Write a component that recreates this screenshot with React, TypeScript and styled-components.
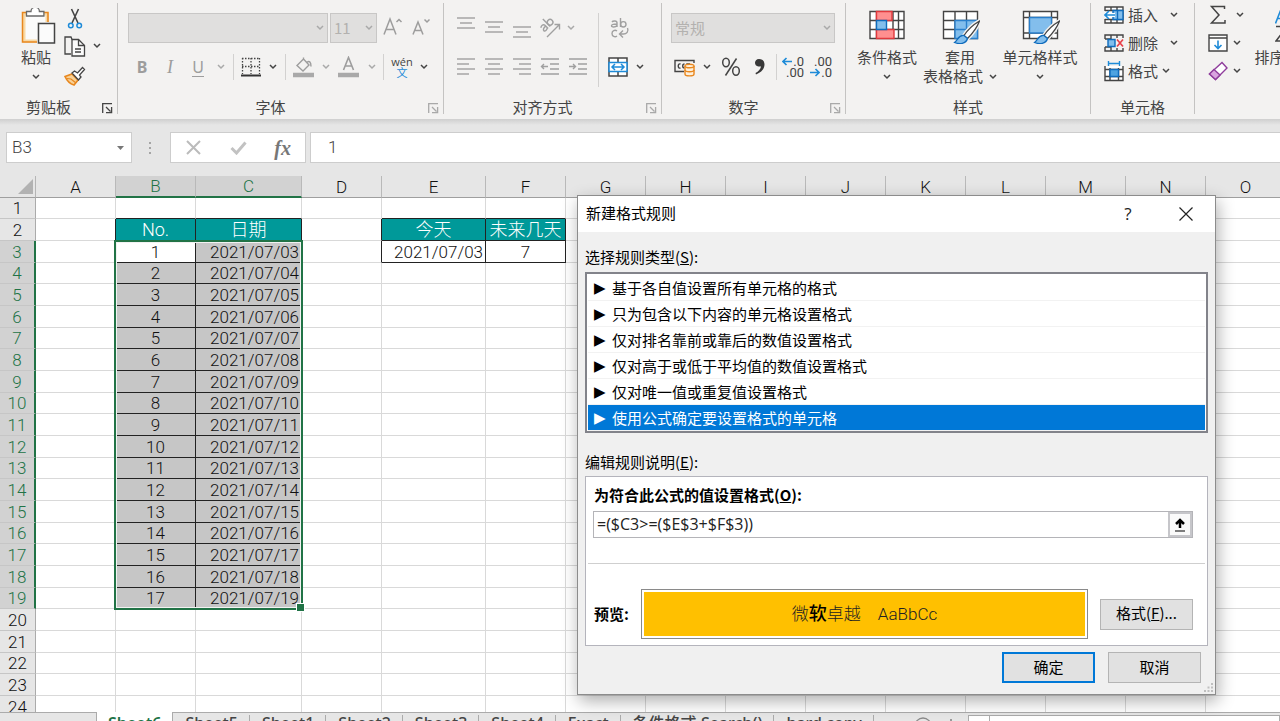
import React from "react";
import styled, { createGlobalStyle, css } from "styled-components";

const UI = `"Noto Sans", "Noto Sans CJK SC", sans-serif`;
const CJK = `"Noto Sans CJK SC", sans-serif`;
const CELL = `Roboto, "Noto Sans CJK SC", sans-serif`;

const INK = "#444";
const MUTED = "#a9a9a9";
const BLUE = "#1e8bd8";
const SKY = "#83beec";
const GREEN = "#217346";
const ORANGE = "#e8871e";

const GlobalStyle = createGlobalStyle`
  * { box-sizing: border-box; }
  html, body { margin: 0; height: 100%; overflow: hidden; background: #e6e6e6; }
  button, input, select { font: inherit; color: inherit; margin: 0; }
  button { border: 0; background: none; padding: 0; cursor: default; }
`;

const Page = styled.div`
  position: relative;
  display: flex;
  flex-direction: column;
  height: calc(100vh + 16px);
  overflow: hidden;
  font-family: ${CJK};
  font-size: 15px;
  color: ${INK};
`;

/* ---------- ribbon ---------- */

const Ribbon = styled.header`
  display: flex;
  flex: none;
  overflow: hidden;
  background: #f3f2f1;
`;

const GroupBox = styled.section<{ $w: number; $last?: boolean }>`
  display: flex;
  flex-direction: column;
  flex: ${(p) => (p.$last ? `1 0 ${p.$w}px` : `0 0 ${p.$w}px`)};
`;

const GroupDivider = styled.div`
  flex: 0 0 1px;
  margin: 3px 0 5px;
  background: #c4c3c2;
`;

const GroupBody = styled.div<{ $top: number; $left: number; $gap?: number }>`
  display: flex;
  height: 97px;
  gap: ${(p) => p.$gap ?? 0}px;
  padding: ${(p) => p.$top}px 0 0 ${(p) => p.$left}px;
`;

const GroupFoot = styled.div`
  display: flex;
  align-items: center;
  height: 22px;
`;

const GroupTitle = styled.div`
  flex: 1;
  padding-bottom: 2px;
  text-align: center;
  line-height: 20px;
`;

const Launcher = styled.button`
  flex: 0 0 20px;
  height: 20px;
  padding-right: 4px;
  display: grid;
  place-items: center end;
`;

const Stack = styled.div<{ $gap?: number }>`
  display: flex;
  flex-direction: column;
  gap: ${(p) => p.$gap ?? 0}px;
`;

const ToolRow = styled.div<{ $h: number }>`
  display: flex;
  align-items: center;
  height: ${(p) => p.$h}px;
`;

const Tool = styled.button<{ $w?: number; $off?: boolean }>`
  flex: none;
  display: flex;
  align-items: center;
  justify-content: center;
  width: ${(p) => p.$w ?? 28}px;
  height: 28px;
  color: ${(p) => (p.$off ? MUTED : INK)};
  svg { flex: none; }
`;

const Letter = styled.span<{ $kind: "bold" | "italic" | "under" }>`
  font-family: "Noto Sans", sans-serif;
  font-size: 16px;
  line-height: 18px;
  color: #9d9d9d;
  ${(p) => p.$kind === "bold" && css`font-weight: 700;`}
  ${(p) => p.$kind === "italic" && css`font-family: "Liberation Serif", serif; font-style: italic; font-size: 18px;`}
  ${(p) => p.$kind === "under" && css`border-bottom: 1px solid #9d9d9d;`}
`;

const ThinRule = styled.div<{ $h?: number }>`
  flex: none;
  width: 1px;
  height: ${(p) => p.$h ?? 26}px;
  margin: 0 4px 0 3px;
  background: #d2d1d0;
`;

const Combo = styled.label<{ $w: number }>`
  display: flex;
  align-items: center;
  width: ${(p) => p.$w}px;
  height: 30px;
  padding: 0 3px;
  border: 1px solid #c8c7c6;
  background: #e0dfde;
  color: #b3b1af;
  & + & { margin-left: 2px; }
  select {
    flex: 1;
    min-width: 0;
    padding: 0 0 2px;
    border: 0;
    appearance: none;
    background: none;
    opacity: 1;
    color: #b3b1af;
  }
`;

const BigButton = styled.button<{ $w: number; $drop?: boolean }>`
  flex: none;
  display: flex;
  flex-direction: column;
  align-items: center;
  width: ${(p) => p.$w}px;
  height: 82px;
  margin-top: ${(p) => (p.$drop ? 7 : 0)}px !important;
  line-height: 19px;
  white-space: nowrap;
  > svg { margin-bottom: 3px; }
`;

const ArrowLine = styled.span`
  display: flex;
  align-items: center;
  gap: 6px;
  height: 19px;
  svg { margin-top: 3px; }
`;

const MenuButton = styled.button<{ $gap: number }>`
  display: flex;
  align-items: center;
  height: 28px;
  line-height: 20px;
  span { margin: 0 ${(p) => p.$gap}px 0 4px; }
`;

const SplitButton = styled.button<{ $gap: number }>`
  display: flex;
  align-items: center;
  gap: ${(p) => p.$gap}px;
  height: 28px;
`;

const Chevron = ({ color = INK }: { color?: string }) => (
  <svg width="8" height="6" viewBox="0 0 8 6" fill="none" stroke={color} strokeWidth="1.5">
    <path d="M1 1l3 3 3-3" />
  </svg>
);

const LauncherMark = ({ color }: { color: string }) => (
  <svg width="11" height="11" viewBox="0 0 11 11" fill="none" stroke={color} strokeWidth="1.3">
    <path d="M.7 10V.7H10M4 4l4.500 4.500M9.600 4v5.600H4" />
  </svg>
);

function Group(props: {
  title: string;
  w: number;
  top: number;
  left: number;
  gap?: number;
  launcher?: string;
  last?: boolean;
  children: React.ReactNode;
}) {
  return (
    <>
      <GroupBox $w={props.w} $last={props.last}>
        <GroupBody $top={props.top} $left={props.left} $gap={props.gap}>
          {props.children}
        </GroupBody>
        <GroupFoot>
          <GroupTitle>{props.title}</GroupTitle>
          {props.launcher && (
            <Launcher aria-label={`${props.title}设置`}>
              <LauncherMark color={props.launcher} />
            </Launcher>
          )}
        </GroupFoot>
      </GroupBox>
      {!props.last && <GroupDivider />}
    </>
  );
}

const PasteIcon = () => (
  <svg width="40" height="36" viewBox="0 0 40 36" fill="none">
    <path d="M8 6h23v27H8z" fill="#fbfbfb" stroke="#f9d9a4" strokeWidth="3" />
    <path d="M6.500 4.500h25.500v29.500h-25.500z" stroke={ORANGE} strokeWidth="1.500" />
    <path d="M10.500 8V3.500h4.500a4.200 4.200 0 0 1 8.400 0h4.500V8z" fill="#fff" stroke="#6a6a6a" strokeWidth="1.300" />
    <path d="M21 14h19v22h-19z" fill="#f3f2f1" />
    <path d="M22.500 15.500h16v19.500h-16z" fill="#fbfbfb" stroke={INK} strokeWidth="1.500" />
  </svg>
);

const CutIcon = () => (
  <svg width="16" height="22" viewBox="0 0 16 22" fill="none">
    <path d="M4.500 1l6.500 14M11.500 1L5 15" stroke={INK} strokeWidth="1.600" />
    <circle cx="3.800" cy="17.500" r="2.300" stroke={BLUE} strokeWidth="1.500" />
    <circle cx="12.200" cy="17.500" r="2.300" stroke={BLUE} strokeWidth="1.500" />
  </svg>
);

const CopyIcon = () => (
  <svg width="22" height="21" viewBox="0 0 22 21" fill="none" stroke={INK} strokeWidth="1.300">
    <path d="M8 3.500L7 1H1v17h6" />
    <path d="M8 3.500h6.500l6 6V20H8z" fill="#fbfbfb" />
    <path d="M14.500 3.500v6h6M11 13h6M11 16h6" />
  </svg>
);

const PainterIcon = () => (
  <svg width="22" height="20" viewBox="0 0 22 20" fill="none">
    <path d="M1 10.500l7-2.500 6 6-4 5c-3.500-1-7-4-9-8.500z" fill="#f8d196" stroke={ORANGE} strokeWidth="1.600" />
    <path d="M3 12.500l4 .5 5 4" stroke={ORANGE} strokeWidth="1.200" />
    <path d="M8 7l2.500-2 3 2 5-5.500 2 2-5 5.500 1.500 2-2.500 3z" fill="#fff" stroke={INK} strokeWidth="1.300" />
  </svg>
);

const GrowFont = ({ down }: { down?: boolean }) => (
  <svg width="20" height="22" viewBox="0 0 20 22" fill="none" stroke="#9d9d9d" strokeWidth="1.500">
    {down ? (
      <path d="M1 17.500L6 5l5 12.500M3 13.500h6M12.500 2.500L15 5l2.500-2.500" />
    ) : (
      <path d="M1 17.500L7 2l6 15.500M3 12.500h8M13.500 5L16 2.500 18.500 5" />
    )}
  </svg>
);

const BordersIcon = () => (
  <svg width="20" height="20" viewBox="0 0 20 20" fill="none" stroke={INK}>
    <path d="M1 1.500h18M1 9.500h18M1.500 1v16M10 1v16M18.500 1v16" strokeWidth="1.300" strokeDasharray="1.500 1.500" />
    <path d="M0 18.500h20" strokeWidth="2" stroke="#333" />
  </svg>
);

const FillIcon = () => (
  <svg width="22" height="22" viewBox="0 0 22 22" fill="none" stroke="#9d9d9d" strokeWidth="1.400">
    <path d="M4 9.500L10.500 3l5.500 6-6 6zM10.500 3V1.500M14 6.500c2-2 4-1 4 4" />
    <path d="M0 19h21" strokeWidth="4.500" stroke={MUTED} />
  </svg>
);

const FontColorIcon = () => (
  <svg width="22" height="22" viewBox="0 0 22 22" fill="none" stroke="#9d9d9d" strokeWidth="1.600">
    <path d="M5.500 14L10.500 1.500 15.500 14M7.500 10h6.500" />
    <path d="M0 19h21" strokeWidth="4.500" stroke={MUTED} />
  </svg>
);

const Wen = styled.span`
  display: flex;
  flex-direction: column;
  align-items: center;
  font-size: 11px;
  line-height: 11px;
  font-family: "Open Sans", "Noto Sans CJK SC", sans-serif;
  b { font-weight: 400; color: ${BLUE}; }
`;

const Lines = ({ rows, h = 30 }: { rows: [number, number, number][]; h?: number }) => (
  <svg width="20" height={h} viewBox={`0 0 20 ${h}`} fill="none" stroke="#a0a0a0" strokeWidth="1.400">
    {rows.map(([x1, x2, y]) => (
      <path key={y} d={`M${x1} ${y}H${x2}`} />
    ))}
  </svg>
);

const IndentIcon = ({ more }: { more?: boolean }) => (
  <svg width="20" height="20" viewBox="0 0 20 20" fill="none" stroke="#a0a0a0" strokeWidth="1.400">
    <path d="M1 2h18M10 7h9M10 12h9M1 17h18" />
    <path d={more ? "M1 9.500h6M5 7l2.500 2.500L5 12" : "M8 9.500H2M4 7L1.500 9.500 4 12"} />
  </svg>
);

const TiltText = () => (
  <svg width="22" height="22" viewBox="0 0 22 22" fill="none" stroke="#a0a0a0" strokeWidth="1.400">
    <g transform="rotate(-45 7 8)">
      <path d="M1.500 6.500c1-1.500 4.500-1.500 4.500 1V12M6 8.500c-3 0-4.500.5-4.500 2s3.500 2 4.500 0" />
      <path d="M9 1.500V12" />
      <circle cx="11.800" cy="9" r="2.800" />
    </g>
    <path d="M8 20L20 8M15.500 7.500h5V12.500" />
  </svg>
);

const WrapIcon = () => (
  <svg width="20" height="22" viewBox="0 0 20 22" fill="none" stroke="#a0a0a0" strokeWidth="1.400">
    <path d="M2 5c1-1.500 5-1.500 5 .8V10M7 7C4 7 1.500 7.200 1.500 8.800S5.500 10.500 7 8.500M10.500 1v9" />
    <circle cx="13.300" cy="7.300" r="2.700" />
    <path d="M7 14c-2-1.500-5-.5-5 2.500s3 4 5 2.500M17.500 11c1.500 3.500-1 6-4 6h-4M13 13.500L9.500 17l3.500 3.500" />
  </svg>
);

const MergeIcon = () => (
  <svg width="20" height="20" viewBox="0 0 20 20" fill="none" stroke={INK} strokeWidth="1.500">
    <path d="M1 1h18v18H1zM10 1v4M10 15v4" fill="#fff" />
    <path d="M1 5.500h18v9H1z" stroke={BLUE} fill="#fff" />
    <path d="M4 10h12M7 7l-3 3 3 3M13 7l3 3-3 3" stroke={BLUE} />
  </svg>
);

const CurrencyIcon = () => (
  <svg width="22" height="20" viewBox="0 0 22 20" fill="none" stroke={INK} strokeWidth="1.400">
    <path d="M20 6V3.500H1v11h9" />
    <path d="M6.500 7C3.500 6 3.500 12 6.500 11M10.500 7a1.800 2 0 1 0 0 4M13 8.500V7h3" />
    <path d="M11 9v8c0 2.500 9 2.500 9 0V9" fill="#fdf0dc" stroke={ORANGE} />
    <ellipse cx="15.500" cy="9" rx="4.500" ry="1.800" fill="#fdf0dc" stroke={ORANGE} />
    <path d="M11 13c0 2.300 9 2.300 9 0" stroke={ORANGE} />
  </svg>
);

const PercentIcon = () => (
  <svg width="20" height="20" viewBox="0 0 20 20" fill="none" stroke={INK} strokeWidth="1.500">
    <ellipse cx="5" cy="5.500" rx="3.300" ry="4.200" />
    <ellipse cx="15" cy="14" rx="3.300" ry="4.200" />
    <path d="M15.500 1.500L4.500 18.500" />
  </svg>
);

const CommaIcon = () => (
  <svg width="12" height="20" viewBox="0 0 12 20">
    <path d="M5 2c-5 0-5.500 7-.5 7.500 1.500.2 2 0 2.500-.2C6.800 12 4.500 14.500 1.500 16l.5 1.500C7.500 15.500 10.500 11.500 10.500 7.500 10.500 4 8.500 2 5 2z" fill="#383838" />
  </svg>
);

const DecimalBox = styled.span`
  display: flex;
  flex-direction: column;
  width: 20px;
  font: 13px/11px Roboto, sans-serif;
`;

const DecimalLine = styled.span`
  display: flex;
  align-items: center;
  justify-content: flex-end;
  gap: 1px;
`;

const DecimalTool = ({ less }: { less?: boolean }) => {
  const arrow = (
    <svg width="10" height="9" viewBox="0 0 10 9" fill="none" stroke={BLUE} strokeWidth="1.600">
      <path d={less ? "M0 4.500h9M5.500 1L9 4.500 5.500 8" : "M10 4.500H1M4.500 1L1 4.500 4.500 8"} />
    </svg>
  );
  return (
    <DecimalBox>
      <DecimalLine>{less ? ".00" : <>{arrow}.0</>}</DecimalLine>
      <DecimalLine>{less ? <>{arrow}.0</> : ".00"}</DecimalLine>
    </DecimalBox>
  );
};

const Brush = () => (
  <g>
    <path d="M39.500 13c-5 3-12 9-15.500 14.500l3.500 3C33 25 37.500 18.500 39.500 13z" fill="#fff" stroke="#f3f2f1" strokeWidth="4" />
    <path d="M39.500 13c-5 3-12 9-15.500 14.500l3.500 3C33 25 37.500 18.500 39.500 13z" fill="#fff" stroke={INK} strokeWidth="1.300" />
    <path d="M24 27.500c-5-1-6 4-9.500 7 5 2 11.500 1.500 13-4z" fill={SKY} stroke="#0f6cbd" strokeWidth="1.300" />
  </g>
);

const CondIcon = () => (
  <svg width="40" height="36" viewBox="0 0 40 36" fill="none" strokeWidth="1.400">
    <path d="M3 3.500h34v27H3zM3 12.500h34M3 21.500h34M9.500 3.500v27M26 3.500v27M31.500 3.500v27" fill="#fff" stroke={INK} />
    <path d="M9.500 3.500H25v9H9.500zM9.500 21.500H27v9H9.500z" fill="#ff8f8f" stroke="#e0393e" />
    <path d="M9.500 12.500h10v9h-10z" fill={SKY} stroke="#0f6cbd" />
  </svg>
);

const TableStyleIcon = () => (
  <svg width="40" height="36" viewBox="0 0 40 36" fill="none" strokeWidth="1.400">
    <path d="M3.500 3.500h34v27h-34zM3.500 12.500h34M3.500 21.500h34M15 3.500v27M26.500 3.500v27" fill="#fff" stroke={INK} />
    <path d="M15 12.500h22.500v18H15zM15 21.500h22.500M26.500 12.500v18" fill={SKY} stroke="#2a7fcb" />
    <Brush />
  </svg>
);

const CellStyleIcon = () => (
  <svg width="40" height="36" viewBox="0 0 40 36" fill="none" strokeWidth="1.400">
    <path d="M3.500 3.500h34v27h-34zM3.500 9.500h34M9.500 3.500v27M31.500 3.500v27M3.500 25h34" fill="#fff" stroke={INK} />
    <path d="M9.500 9.500h22v15.500h-22z" fill={SKY} stroke="#2a7fcb" />
    <Brush />
  </svg>
);

const InsertIcon = () => (
  <svg width="20" height="18" viewBox="0 0 20 18" fill="none" stroke={INK} strokeWidth="1.400">
    <path d="M1 5V1h18v16H1v-4M1 4.500h18M1 13.500h18M7 1v3M13 1v16M7 14v3" fill="#fff" />
    <path d="M9 4.500h10v9H9z" fill={SKY} stroke="#0f6cbd" />
    <path d="M13.500 4.500v9" stroke="#0f6cbd" />
    <path d="M11 9H1" stroke="#fff" strokeWidth="4" />
    <path d="M11 9H1.500M5 5L1 9l4 4" stroke={BLUE} strokeWidth="1.600" />
  </svg>
);

const DeleteIcon = () => (
  <svg width="20" height="18" viewBox="0 0 20 18" fill="none" stroke={INK} strokeWidth="1.400">
    <path d="M1 5V1h18v3M1 13v4h18v-3M7 1v16M13 1v3M13 14v3M1 5h6M1 13h6" />
    <path d="M4 5.500h7v7H4z" fill={SKY} stroke="#0f6cbd" />
    <path d="M13 5.500l6 7M19 5.500l-6 7" stroke="#e8414a" strokeWidth="1.700" />
  </svg>
);

const FormatIcon = () => (
  <svg width="20" height="21" viewBox="0 0 20 21" fill="none" stroke={INK} strokeWidth="1.400">
    <path d="M1 5v14.500h18V5M1 8.500h18M1 15.500h18M6 7v12.500M14.500 7v12.500" fill="#fff" />
    <path d="M6 8.500h8.500v7H6z" fill="#4ea3e0" stroke="#0f6cbd" />
    <path d="M4.500 2.500h11M4.500 0v5M15.500 0v5" stroke={BLUE} />
  </svg>
);

const SigmaIcon = () => (
  <svg width="20" height="20" viewBox="0 0 20 20" fill="none" stroke={INK} strokeWidth="1.500">
    <path d="M16.500 4V1.500h-13L11 10l-7.500 8h13.500V15" />
  </svg>
);

const FillDownIcon = () => (
  <svg width="20" height="18" viewBox="0 0 20 18" fill="none" stroke={INK} strokeWidth="1.400">
    <path d="M1 1h18v16H1zM1 4h18" fill="#fff" />
    <path d="M10 6.500v8M6.500 11l3.500 3.500 3.500-3.500" stroke={BLUE} strokeWidth="1.600" />
  </svg>
);

const EraserIcon = () => (
  <svg width="20" height="20" viewBox="0 0 20 20" fill="none" stroke="#8f3d9c" strokeWidth="1.400">
    <path d="M14 1.500L19 7 7.500 18.500 1.500 13z" fill="#fff" />
    <path d="M6 8.500l6 5.500-4.500 4.500L1.500 13z" fill="#d9a4df" />
  </svg>
);

const SortIcon = () => (
  <svg width="34" height="36" viewBox="0 0 34 36" fill="none" strokeWidth="1.600">
    <path d="M.5 15.500L6.500 0l6 15.500M2.500 10.500h8" stroke={BLUE} />
    <path d="M1 18.500h11L1 33h11.500" stroke={INK} />
    <path d="M25 2v30M20 27l5 5 5-5" stroke={INK} />
  </svg>
);

/* ---------- formula bar ---------- */

const FormulaBar = styled.div`
  display: flex;
  flex: none;
  height: 57px;
  padding: 13px 0 13px 6px;
  background: linear-gradient(#cfcfcf, #e6e6e6 6px);
`;

const NameBox = styled.label`
  display: flex;
  align-items: center;
  width: 126px;
  padding: 0 7px 0 5px;
  border: 1px solid #cdcdcd;
  background: #fff;
  input {
    flex: 1;
    min-width: 0;
    padding: 0 0 2px;
    border: 0;
    background: none;
    font: 300 17px/20px ${CELL};
    color: #444;
  }
`;

const Dots = styled.div`
  display: flex;
  flex-direction: column;
  justify-content: center;
  align-items: center;
  gap: 3px;
  width: 36px;
  margin-right: 2px;
  i { width: 2px; height: 2px; background: #a5a5a5; }
`;

const EntryTools = styled.div`
  display: flex;
  width: 136px;
  border: 1px solid #cdcdcd;
  background: #fff;
`;

const EntryButton = styled.button`
  flex: 1;
  display: grid;
  place-items: center;
  font: italic 700 20px/20px "Liberation Serif", serif;
  color: #777;
`;

const FormulaInput = styled.input`
  flex: 1;
  min-width: 0;
  margin-left: 4px !important;
  padding: 0 17px 2px;
  border: 1px solid #cdcdcd;
  border-right: 0;
  background: #fff;
  font: 300 17px/20px ${CELL} !important;
`;

/* ---------- grid ---------- */

const Sheet = styled.main`
  flex: 1;
  min-height: 0;
  overflow: hidden;
  background: #fff;
`;

const Grid = styled.table`
  table-layout: fixed;
  border-collapse: separate;
  border-spacing: 0;
  width: 2166px;
  font: 300 17px/20px ${CELL};
  color: #111;
  tbody tr { height: 22px; }
  tbody tr:nth-child(3n + 1) { height: 21px; }
  th, td { padding: 0; font-weight: 300; line-height: 20px; }
`;

const Corner = styled.th`
  height: 21px;
  background: #e6e6e6;
  border-right: 1px solid #b5b5b5;
  border-bottom: 1px solid #9f9f9f;
  svg { display: block; margin: 0 0 0 18px; }
`;

const ColHead = styled.th<{ $on: boolean }>`
  height: 21px;
  border-right: 1px solid #b9b9b9;
  border-bottom: 1px solid #9f9f9f;
  background: #e6e6e6;
  ${(p) =>
    p.$on &&
    css`
      background: #d2d2d2;
      color: ${GREEN};
      border-bottom: 2px solid ${GREEN};
    `}
`;

const RowHead = styled.th<{ $on: boolean }>`
  border-right: 1px solid #ababab;
  border-bottom: 1px solid #c6c6c6;
  background: #e6e6e6;
  ${(p) =>
    p.$on &&
    css`
      background: #d2d2d2;
      color: ${GREEN};
      border-right: 2px solid ${GREEN};
    `}
`;

type Look = "plain" | "head" | "picked" | "active" | "boxed";

const Cell = styled.td<{ $look: Look; $right?: boolean; $darkR?: boolean; $darkB?: boolean }>`
  position: relative;
  border-right: 1px solid ${(p) => (p.$darkR ? "#222" : "#d9d9d9")};
  border-bottom: 1px solid ${(p) => (p.$darkB ? "#222" : "#d9d9d9")};
  text-align: ${(p) => (p.$right ? "right" : "center")};
  white-space: nowrap;
  ${(p) => p.$right && css`&& { padding-right: 2px; }`}
  ${(p) => p.$look === "head" && css`background: #009999; color: #fff; font-size: 18px;`}
  ${(p) => p.$look === "picked" && css`background: #c6c6c6;`}
`;

const Selection = styled.div`
  position: absolute;
  z-index: 1;
  top: -1px;
  left: -2px;
  width: 189px;
  height: 370px;
  border: 2px solid ${GREEN};
  box-shadow: inset 0 0 0 1px #f2f2f2;
  pointer-events: none;
  &::after {
    content: "";
    position: absolute;
    right: -4px;
    bottom: -4px;
    width: 7px;
    height: 7px;
    border: 1px solid #fff;
    background: ${GREEN};
  }
`;

/* ---------- sheet tabs ---------- */

const TabBar = styled.nav`
  display: flex;
  flex: none;
  height: 25px;
  padding-left: 96px;
  border-top: 1px solid #ababab;
  background: #e6e6e6;
`;

const Tab = styled.button<{ $on?: boolean }>`
  flex: none;
  display: flex;
  height: 20px;
  align-items: center;
  color: ${INK};
  font: 500 16px/20px ${UI};
  span { padding: 0 11px 0 12px; border-right: 1px solid #ababab; line-height: 16px; }
  ${(p) =>
    p.$on &&
    css`
      height: 26px;
      margin-top: -1px !important;
      padding-bottom: 5px;
      background: #fff;
      color: ${GREEN};
      font-weight: 600;
      border-left: 1px solid #ababab;
      border-right: 1px solid #ababab;
      span { border: 0; padding: 0 11px; }
    `}
`;

const TabExtras = styled.div`
  display: flex;
  gap: 18px;
  margin: 4px 16px 0 40px;
  i { width: 2px; height: 2px; margin-top: 2px; background: #999; }
`;

const ScrollTrack = styled.div`
  flex: 1;
  margin-top: 2px;
  padding-left: 20px;
  border: 1px solid #ababab;
  background: #fff;
  i { display: block; height: 100%; border-left: 1px solid #ababab; }
`;

/* ---------- dialog ---------- */

const Dialog = styled.div`
  position: absolute;
  z-index: 2;
  top: 195px;
  left: 577px;
  width: 639px;
  border: 1px solid #8c8c8c;
  background: #f0f0f0;
  box-shadow: 2px 6px 16px rgba(0, 0, 0, 0.32);
  color: #000;
  font-family: ${CJK};
`;

const TitleBar = styled.div`
  display: flex;
  align-items: center;
  height: 36px;
  padding: 0 20px 0 8px;
  background: #fff;
`;

const DialogTitle = styled.h1`
  flex: 1;
  margin: 0;
  padding-bottom: 2px;
  font-size: 15px;
  font-weight: 400;
  line-height: 22px;
`;

const TitleButton = styled.button`
  display: grid;
  place-items: center;
  width: 18px;
  height: 30px;
  margin-left: 40px !important;
  font: 17px/28px "Open Sans", sans-serif;
  color: #222;
`;

const DialogBody = styled.div`
  padding: 14px 7px 11px;
`;

const Caption = styled.div<{ $gap?: boolean }>`
  height: 22px;
  line-height: 21px;
  margin: ${(p) => (p.$gap ? "18px 0 3px" : "0 0 4px")};
`;

const RuleList = styled.ul`
  margin: 0;
  padding: 1px 1px 0;
  list-style: none;
  border: 2px solid #82838a;
  background: #fff;
`;

const Rule = styled.li<{ $on: boolean }>`
  display: flex;
  align-items: center;
  height: 26px;
  padding-left: 6px;
  border-bottom: 1px solid #f2f2f2;
  line-height: 24px;
  ${(p) => p.$on && css`background: #0078d7; color: #fff;`}
  span { width: 18px; font-family: "DejaVu Sans", sans-serif; }
`;

const RulePanel = styled.div`
  padding: 7px 2px 6px;
  border: 1px solid #b4b4bc;
  background: #fff;
`;

const Strong = styled.label`
  display: block;
  padding-left: 6px;
  font-weight: 700;
  line-height: 22px;
`;

const FormulaField = styled.div`
  display: flex;
  height: 27px;
  margin: 5px 12px 25px 5px;
  border: 1px solid #b4b4b8;
  input {
    flex: 1;
    min-width: 0;
    padding: 0 3px 2px;
    border: 0;
    font: 16px/20px "Open Sans", sans-serif;
    color: #222;
  }
  button {
    display: grid;
    place-items: center;
    width: 24px;
    border: 2px solid #c6c6ca;
    background: #fafafa;
  }
`;

const PanelRule = styled.hr`
  margin: 0 0 25px;
  border: 0;
  border-top: 1px solid #cfcfcf;
`;

const PreviewRow = styled.div`
  display: flex;
  align-items: center;
  padding: 0 12px 0 6px;
`;

const PreviewLabel = styled.div`
  width: 47px;
  padding-bottom: 2px;
  font-weight: 700;
`;

const Preview = styled.output`
  flex: 1;
  display: flex;
  align-items: center;
  justify-content: center;
  height: 50px;
  margin-right: 12px;
  border: 1px solid #8a8a8a;
  box-shadow: inset 0 0 0 2px #fff;
  background: #ffc000;
  font: 300 17px/24px ${CELL};
  color: #222;
  b { font-weight: 500; font-size: 18px; color: #000; }
`;

const PushButton = styled.button<{ $primary?: boolean }>`
  width: 93px;
  height: 31px;
  padding-bottom: 2px;
  border: ${(p) => (p.$primary ? "2px solid #0078d7" : "1px solid #b4b4b4")};
  background: #e1e1e1;
  line-height: 22px;
`;

const Actions = styled.div`
  display: flex;
  justify-content: flex-end;
  gap: 13px;
  margin: 6px 7px 0 0;
`;

const Grip = styled.svg`
  position: absolute;
  right: 1px;
  bottom: 1px;
`;

/* ---------- data ---------- */

const COLS = "ABCDEFGHIJKLMNOPQRSTUVWXYZ".split("");
const COL_WIDTH: Record<string, number> = { C: 106, E: 104 };
const ROWS = Array.from({ length: 40 }, (_, i) => i + 1);

const RULES = [
  "基于各自值设置所有单元格的格式",
  "只为包含以下内容的单元格设置格式",
  "仅对排名靠前或靠后的数值设置格式",
  "仅对高于或低于平均值的数值设置格式",
  "仅对唯一值或重复值设置格式",
  "使用公式确定要设置格式的单元格",
];

const TABS = ["Sheet6", "Sheet5", "Sheet1", "Sheet2", "Sheet3", "Sheet4", "Exact", "条件格式.Search()", "hard copy"];

const HEADINGS: Record<string, string> = { B2: "No.", C2: "日期", E2: "今天", F2: "未来几天" };

function cellAt(col: string, row: number) {
  const key = col + row;
  let text = HEADINGS[key] ?? "";
  let look: Look = text ? "head" : "plain";
  const listed = row >= 3 && row <= 19;
  if (listed && col === "B") {
    text = String(row - 2);
    look = row === 3 ? "active" : "picked";
  }
  if (listed && col === "C") {
    text = `2021/07/${String(row).padStart(2, "0")}`;
    look = "picked";
  }
  if (key === "E3") [text, look] = ["2021/07/03", "boxed"];
  if (key === "F3") [text, look] = ["7", "boxed"];
  const framed = look !== "plain";
  const darkR = framed || (row === 2 && (col === "A" || col === "D")) || key === "D3";
  const darkB = framed || (row === 1 && "BCEF".includes(col));
  const right = (col === "C" || col === "E") && row > 2;
  return { key, text, look, darkR, darkB, right };
}

export default function App() {
  return (
    <Page>
      <GlobalStyle />
      <Ribbon>
        <Group title="剪贴板" w={117} top={8} left={8} launcher={INK}>
          <BigButton $w={56}>
            <PasteIcon />
            粘贴
            <ArrowLine><Chevron /></ArrowLine>
          </BigButton>
          <Stack>
            <ToolRow $h={22}><Tool $w={22} aria-label="剪切"><CutIcon /></Tool></ToolRow>
            <ToolRow $h={32}>
              <Tool $w={22} aria-label="复制"><CopyIcon /></Tool>
              <Tool $w={22} aria-label="复制选项"><Chevron /></Tool>
            </ToolRow>
            <ToolRow $h={28}><Tool $w={22} aria-label="格式刷"><PainterIcon /></Tool></ToolRow>
          </Stack>
        </Group>

        <Group title="字体" w={325} top={13} left={10} launcher={MUTED}>
          <Stack $gap={10}>
            <ToolRow $h={30}>
              <Combo $w={200}>
                <select disabled aria-label="字体"><option></option></select>
                <Chevron color={MUTED} />
              </Combo>
              <Combo $w={47}>
                <select disabled aria-label="字号"><option>11</option></select>
                <Chevron color={MUTED} />
              </Combo>
              <Tool $w={32} $off aria-label="增大字号"><GrowFont /></Tool>
              <Tool $w={26} $off aria-label="减小字号"><GrowFont down /></Tool>
            </ToolRow>
            <ToolRow $h={28}>
              <Tool $off><Letter $kind="bold">B</Letter></Tool>
              <Tool $off><Letter $kind="italic">I</Letter></Tool>
              <Tool $off><Letter $kind="under">U</Letter></Tool>
              <Tool $w={18} $off aria-label="下划线选项"><Chevron color={MUTED} /></Tool>
              <ThinRule />
              <Tool $w={26} aria-label="边框"><BordersIcon /></Tool>
              <Tool $w={18} aria-label="边框选项"><Chevron /></Tool>
              <ThinRule />
              <Tool $w={28} $off aria-label="填充颜色"><FillIcon /></Tool>
              <Tool $w={16} $off aria-label="填充颜色选项"><Chevron color={MUTED} /></Tool>
              <Tool $w={30} $off aria-label="字体颜色"><FontColorIcon /></Tool>
              <Tool $w={16} $off aria-label="字体颜色选项"><Chevron color={MUTED} /></Tool>
              <ThinRule />
              <Tool $w={28}><Wen>wén<b>文</b></Wen></Tool>
              <Tool $w={16} aria-label="拼音选项"><Chevron /></Tool>
            </ToolRow>
          </Stack>
        </Group>

        <Group title="对齐方式" w={217} top={13} left={8} gap={3} launcher={MUTED}>
          <Stack $gap={10}>
            <ToolRow $h={30}>
              <Tool aria-label="顶端对齐"><Lines rows={[[1, 19, 5], [4, 16, 10], [1, 19, 15]]} /></Tool>
              <Tool aria-label="垂直居中"><Lines rows={[[1, 19, 9], [4, 16, 14], [1, 19, 19]]} /></Tool>
              <Tool aria-label="底端对齐"><Lines rows={[[1, 19, 14], [4, 16, 19], [1, 19, 24]]} /></Tool>
              <Tool aria-label="方向"><TiltText /></Tool>
              <Tool $w={14} aria-label="方向选项"><Chevron color={MUTED} /></Tool>
            </ToolRow>
            <ToolRow $h={28}>
              <Tool aria-label="左对齐"><Lines h={20} rows={[[1, 19, 2], [1, 13, 7], [1, 19, 12], [1, 13, 17]]} /></Tool>
              <Tool aria-label="居中"><Lines h={20} rows={[[1, 19, 2], [4, 16, 7], [1, 19, 12], [4, 16, 17]]} /></Tool>
              <Tool aria-label="右对齐"><Lines h={20} rows={[[1, 19, 2], [7, 19, 7], [1, 19, 12], [7, 19, 17]]} /></Tool>
              <Tool aria-label="减少缩进"><IndentIcon /></Tool>
              <Tool aria-label="增加缩进"><IndentIcon more /></Tool>
            </ToolRow>
          </Stack>
          <ThinRule $h={74} />
          <Stack $gap={10}>
            <ToolRow $h={30}><Tool $w={28} aria-label="自动换行"><WrapIcon /></Tool></ToolRow>
            <ToolRow $h={28}>
              <Tool $w={24} aria-label="合并后居中"><MergeIcon /></Tool>
              <Tool $w={20} aria-label="合并选项"><Chevron /></Tool>
            </ToolRow>
          </Stack>
        </Group>

        <Group title="数字" w={183} top={13} left={9} launcher={MUTED}>
          <Stack $gap={10}>
            <ToolRow $h={30}>
              <Combo $w={164}>
                <select disabled aria-label="数字格式"><option>常规</option></select>
                <Chevron color={MUTED} />
              </Combo>
            </ToolRow>
            <ToolRow $h={28}>
              <Tool aria-label="会计数字格式"><CurrencyIcon /></Tool>
              <Tool $w={16} aria-label="会计数字格式选项"><Chevron /></Tool>
              <Tool $w={32} aria-label="百分比样式"><PercentIcon /></Tool>
              <Tool $w={26} aria-label="千位分隔样式"><CommaIcon /></Tool>
              <ThinRule />
              <Tool $w={26}><DecimalTool /></Tool>
              <Tool $w={30}><DecimalTool less /></Tool>
            </ToolRow>
          </Stack>
        </Group>

        <Group title="样式" w={244} top={8} left={6}>
          <BigButton $w={70}>
            <CondIcon />
            条件格式
            <ArrowLine><Chevron /></ArrowLine>
          </BigButton>
          <BigButton $w={76}>
            <TableStyleIcon />
            套用
            <ArrowLine>表格格式<Chevron /></ArrowLine>
          </BigButton>
          <BigButton $w={84}>
            <CellStyleIcon />
            单元格样式
            <ArrowLine><Chevron /></ArrowLine>
          </BigButton>
        </Group>

        <Group title="单元格" w={103} top={1} left={13}>
          <Stack>
            <MenuButton $gap={12}><InsertIcon /><span>插入</span><Chevron /></MenuButton>
            <MenuButton $gap={12}><DeleteIcon /><span>删除</span><Chevron /></MenuButton>
            <MenuButton $gap={4}><FormatIcon /><span>格式</span><Chevron /></MenuButton>
          </Stack>
        </Group>

        <Group title="" w={160} top={1} left={13} gap={8} last>
          <Stack>
            <SplitButton $gap={8} aria-label="求和"><SigmaIcon /><Chevron /></SplitButton>
            <SplitButton $gap={5} aria-label="填充"><FillDownIcon /><Chevron /></SplitButton>
            <SplitButton $gap={5} aria-label="清除"><EraserIcon /><Chevron /></SplitButton>
          </Stack>
          <BigButton $w={80} $drop>
            <SortIcon />
            排序和筛选
          </BigButton>
        </Group>
      </Ribbon>

      <FormulaBar>
        <NameBox>
          <input aria-label="名称框" defaultValue="B3" />
          <svg width="7" height="4" viewBox="0 0 7 4"><path d="M0 0h7L3.500 4z" fill="#777" /></svg>
        </NameBox>
        <Dots><i /><i /><i /></Dots>
        <EntryTools>
          <EntryButton aria-label="取消输入">
            <svg width="15" height="15" viewBox="0 0 15 15" stroke="#bbb" strokeWidth="2"><path d="M1 1l13 13M14 1L1 14" /></svg>
          </EntryButton>
          <EntryButton aria-label="输入">
            <svg width="17" height="14" viewBox="0 0 17 14" fill="none" stroke="#c2c2c2" strokeWidth="3"><path d="M1.500 7l5 5L15.500 1.500" /></svg>
          </EntryButton>
          <EntryButton>fx</EntryButton>
        </EntryTools>
        <FormulaInput aria-label="编辑栏" defaultValue="1" />
      </FormulaBar>

      <Sheet>
        <Grid>
          <colgroup>
            <col width={36} />
            {COLS.map((c) => <col key={c} width={COL_WIDTH[c] ?? 80} />)}
          </colgroup>
          <thead>
            <tr>
              <Corner>
                <svg width="15" height="15" viewBox="0 0 15 15"><path d="M15 0v15H0z" fill="#b2b2b2" /></svg>
              </Corner>
              {COLS.map((c) => <ColHead key={c} scope="col" $on={c === "B" || c === "C"}>{c}</ColHead>)}
            </tr>
          </thead>
          <tbody>
            {ROWS.map((r) => (
              <tr key={r}>
                <RowHead scope="row" $on={r >= 3 && r <= 19}>{r}</RowHead>
                {COLS.map((c) => {
                  const d = cellAt(c, r);
                  return (
                    <Cell key={d.key} $look={d.look} $right={d.right} $darkR={d.darkR} $darkB={d.darkB}>
                      {d.text}
                      {d.look === "active" && <Selection />}
                    </Cell>
                  );
                })}
              </tr>
            ))}
          </tbody>
        </Grid>
      </Sheet>

      <TabBar>
        {TABS.map((t, i) => <Tab key={t} $on={i === 0}><span>{t}</span></Tab>)}
        <TabExtras>
          <svg width="18" height="18" viewBox="0 0 18 18" fill="none" stroke="#8a8a8a" strokeWidth="1.300">
            <circle cx="9" cy="9" r="8" /><path d="M9 5v8M5 9h8" />
          </svg>
          <i />
        </TabExtras>
        <ScrollTrack><i /></ScrollTrack>
      </TabBar>

      <Dialog role="dialog" aria-labelledby="dialog-title">
        <TitleBar>
          <DialogTitle id="dialog-title">新建格式规则</DialogTitle>
          <TitleButton>?</TitleButton>
          <TitleButton aria-label="关闭">
            <svg width="14" height="14" viewBox="0 0 14 14" stroke="#222" strokeWidth="1.200"><path d="M.5.5l13 13M13.500.5l-13 13" /></svg>
          </TitleButton>
        </TitleBar>
        <DialogBody>
          <Caption id="rule-type">选择规则类型(<u>S</u>):</Caption>
          <RuleList role="listbox" aria-labelledby="rule-type">
            {RULES.map((r, i) => (
              <Rule key={r} role="option" aria-selected={i === 5} $on={i === 5}><span>▶</span>{r}</Rule>
            ))}
          </RuleList>
          <Caption $gap>编辑规则说明(<u>E</u>):</Caption>
          <RulePanel>
            <Strong htmlFor="rule-formula">为符合此公式的值设置格式(<u>O</u>):</Strong>
            <FormulaField>
              <input id="rule-formula" defaultValue="=($C3>=($E$3+$F$3))" />
              <button aria-label="折叠对话框">
                <svg width="12" height="14" viewBox="0 0 12 14" fill="none" stroke="#000">
                  <path d="M6 10V3M2 6l4-4 4 4" strokeWidth="2.500" /><path d="M1 13h10" />
                </svg>
              </button>
            </FormulaField>
            <PanelRule />
            <PreviewRow>
              <PreviewLabel>预览:</PreviewLabel>
              <Preview>微<b>软</b>卓越　AaBbCc</Preview>
              <PushButton>格式(<u>F</u>)...</PushButton>
            </PreviewRow>
          </RulePanel>
          <Actions>
            <PushButton $primary>确定</PushButton>
            <PushButton>取消</PushButton>
          </Actions>
        </DialogBody>
        <Grip width="10" height="10" viewBox="0 0 10 10" fill="#bfbfbf">
          <path d="M7 0h2v2H7zM7 3.500h2v2H7zM7 7h2v2H7zM3.500 3.500h2v2h-2zM3.500 7h2v2h-2zM0 7h2v2H0z" />
        </Grip>
      </Dialog>
    </Page>
  );
}
